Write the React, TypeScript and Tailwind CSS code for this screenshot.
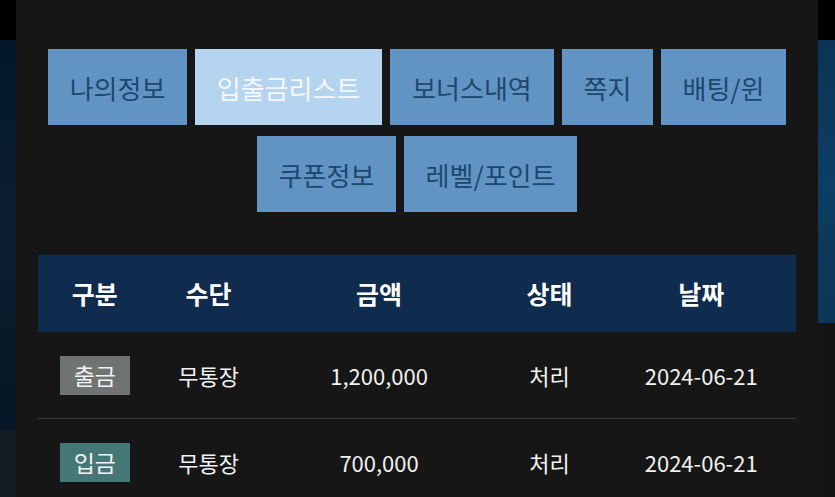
// App.tsx
// My page – deposit/withdrawal list tab with transaction table.

const tabs = [
  { label: '나의정보', width: 'w-[139px]' },
  { label: '입출금리스트', width: 'w-[187px]', active: true },
  { label: '보너스내역', width: 'w-[164px]' },
  { label: '쪽지', width: 'w-[91px]' },
  { label: '배팅/윈', width: 'w-[125px]' },
  { label: '쿠폰정보', width: 'w-[139px]' },
  { label: '레벨/포인트', width: 'w-[173px]' },
];

const rows = [
  { type: '출금', method: '무통장', amount: '1,200,000', status: '처리', date: '2024-06-21' },
  { type: '입금', method: '무통장', amount: '700,000', status: '처리', date: '2024-06-21' },
];

export default function App() {
  return (
    <div
      className="flex h-[497px] w-[835px] overflow-hidden bg-black"
      style={{ fontFamily: '"Noto Sans CJK KR", "Noto Sans", sans-serif' }}
    >
      {/* Left backdrop strip */}
      <div className="flex w-4 flex-col">
        <div className="h-10 bg-black" />
        <div className="flex-1 bg-gradient-to-b from-[#04182b] via-[#0a1e30] to-[#061625]" />
        <div className="h-[66px] bg-[#151b22]" />
      </div>

      {/* Main panel */}
      <div className="flex-1 bg-[#161616] px-[22px] pt-[49px]">
        <div className="flex flex-wrap justify-center gap-x-2 gap-y-[11px]">
          {tabs.map(tab => (
            <button
              key={tab.label}
              className={`${tab.width} flex h-[76px] items-center justify-center text-[26px] ${
                tab.active ? 'bg-[#b5d4ef] text-[#f4f8fc]' : 'bg-[#6194c2] text-[#1c4771]'
              }`}
            >
              {tab.label}
            </button>
          ))}
        </div>

        <div className="mt-[43px]">
          <div className="grid h-[77px] grid-cols-[15%_15%_30%_15%_25%] items-center bg-[#0f2b4d] text-[25px] font-bold text-white">
            <div className="text-center">구분</div>
            <div className="text-center">수단</div>
            <div className="text-center">금액</div>
            <div className="text-center">상태</div>
            <div className="text-center">날짜</div>
          </div>
          {rows.map(row => (
            <div
              key={row.type}
              className="grid h-[87px] grid-cols-[15%_15%_30%_15%_25%] items-center border-b border-[#3c3c3c] text-[22px] text-[#f2f2f2]"
            >
              <div className="flex justify-center">
                <span
                  className={`flex h-[39px] w-[70px] items-center justify-center text-[23px] ${
                    row.type === '출금' ? 'bg-[#6f7372]' : 'bg-[#467777]'
                  }`}
                >
                  {row.type}
                </span>
              </div>
              <div className="text-center">{row.method}</div>
              <div className="text-center">{row.amount}</div>
              <div className="text-center">{row.status}</div>
              <div className="text-center">{row.date}</div>
            </div>
          ))}
        </div>
      </div>

      {/* Right backdrop strip */}
      <div className="flex w-[17px] flex-col">
        <div className="h-10 bg-black" />
        <div className="h-[283px] bg-gradient-to-b from-[#0a3457] via-[#0d3d64] to-[#0b3657]" />
        <div className="flex-1 bg-[#141414]" />
      </div>
    </div>
  );
}
